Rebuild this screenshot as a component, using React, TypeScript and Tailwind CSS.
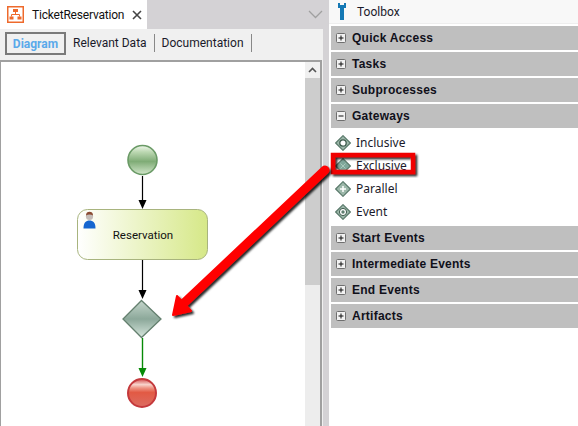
import React from 'react';

const ui = 'font-["Roboto","Liberation_Sans",sans-serif]';
const sans = 'font-["Noto_Sans","Liberation_Sans",sans-serif]';
const heading = 'font-["Liberation_Sans",sans-serif]';

function Expander({ open }: { open?: boolean }) {
  return (
    <svg width="11" height="11" viewBox="0 0 11 11" className="shrink-0">
      <rect x="0.5" y="0.5" width="9" height="9" rx="1" fill="#f2f2f2" stroke="#6f6f6f" />
      <path d={open ? 'M2.5 5h5' : 'M2.5 5h5M5 2.5v5'} stroke="#111" strokeWidth="1" />
    </svg>
  );
}

function Header({ label, open }: { label: string; open?: boolean }) {
  return (
    <div className="h-6 flex items-center pl-[5px] gap-[5px] bg-[#bfbfbf] mb-0.5">
      <Expander open={open} />
      <span className={`${heading} font-bold text-[12px] tracking-[0.25px] text-[#10101a]`}>{label}</span>
    </div>
  );
}

function GatewayIcon({ mark, flat }: { mark: 'ring' | 'x' | 'plus' | 'target'; flat?: boolean }) {
  return (
    <svg width="16" height="16" viewBox="0 0 16 16" className="shrink-0">
      <path d="M8 .7 15.3 8 8 15.3 .7 8Z" fill={flat ? '#7fa79a' : '#9db8aa'} stroke="#5a7a6b" strokeWidth="1.2" />
      {mark === 'ring' && <circle cx="8" cy="8" r="3.2" fill="#fff" stroke="#3f5c4e" strokeWidth="1.3" />}
      {mark === 'x' && <path d="M5.5 5.5l5 5M10.5 5.5l-5 5" stroke="#a9c8bb" strokeWidth="1" />}
      {mark === 'plus' && <path d="M8 5v6M5 8h6" stroke="#fff" strokeWidth="1.5" />}
      {mark === 'target' && (
        <>
          <circle cx="8" cy="8" r="3.6" fill="#fff" stroke="#3f5c4e" />
          <circle cx="8" cy="8" r="1.7" fill="#5f7f70" />
        </>
      )}
    </svg>
  );
}

function Item({ label, mark }: { label: string; mark: 'ring' | 'x' | 'plus' | 'target' }) {
  return (
    <div className="h-[23px] flex items-center pl-[4px] gap-[5px]">
      <GatewayIcon mark={mark} flat={mark === 'x'} />
      <span className={`${sans} text-[12px] text-[#1a1a2a]`}>{label}</span>
    </div>
  );
}

function Diagram() {
  return (
    <svg width="304" height="364" viewBox="1 62 304 364" className="block">
      <defs>
        <linearGradient id="gGreen" x1="0" y1="0" x2="0" y2="1">
          <stop offset="0" stopColor="#f0f7ec" />
          <stop offset="0.22" stopColor="#bcd8b2" />
          <stop offset="0.55" stopColor="#7fac76" />
          <stop offset="1" stopColor="#d2e6cb" />
        </linearGradient>
        <linearGradient id="gRed" x1="0" y1="0" x2="0" y2="1">
          <stop offset="0" stopColor="#d24c4c" />
          <stop offset="0.2" stopColor="#f8d4cc" />
          <stop offset="0.32" stopColor="#ee9484" />
          <stop offset="0.48" stopColor="#e25a44" />
          <stop offset="1" stopColor="#dc6c62" />
        </linearGradient>
        <linearGradient id="gTask" x1="0" y1="0" x2="1" y2="0">
          <stop offset="0" stopColor="#ffffff" />
          <stop offset="1" stopColor="#d6e888" />
        </linearGradient>
        <linearGradient id="gGate" x1="0" y1="0" x2="0" y2="1">
          <stop offset="0" stopColor="#c5d6cc" />
          <stop offset="0.5" stopColor="#8ca89a" />
          <stop offset="1" stopColor="#d6e6dd" />
        </linearGradient>
      </defs>

      <circle cx="142.5" cy="160" r="14.5" fill="url(#gGreen)" stroke="#6a9a66" strokeWidth="1.6" />
      <path d="M142.5 176V202" stroke="#000" strokeWidth="1.2" />
      <path d="M138.5 200h8l-4 9Z" fill="#000" />

      <rect x="77.5" y="209.5" width="130" height="50" rx="10" fill="url(#gTask)" stroke="#a8b47e" />
      <circle cx="89.5" cy="216.5" r="3.6" fill="#c4bcb8" />
      <path d="M86 215.5c0-3 1.500-3.800 3.500-3.800s3.500 .8 3.500 3.800c-2-1.200-5-1.200-7 0Z" fill="#8a4a32" />
      <path d="M83.500 228.500c0-6 2.500-8 6-8s6 2 6 8Z" fill="#1566d0" />
      <text x="143" y="239" textAnchor="middle" fontSize="11.5" fill="#111" fontFamily="Roboto, Liberation Sans, sans-serif">
        Reservation
      </text>

      <path d="M142.5 260V293" stroke="#000" strokeWidth="1.2" />
      <path d="M138.5 290h8l-4 9Z" fill="#000" />

      <path d="M141.5 300.5 161 319 141.5 337.5 123 319Z" fill="url(#gGate)" stroke="#64806f" strokeWidth="1.3" />

      <path d="M142.5 338V372" stroke="#078a07" strokeWidth="1.4" />
      <path d="M138.5 368h8l-4 9Z" fill="#078a07" />

      <circle cx="142" cy="393" r="14" fill="url(#gRed)" stroke="#c4393c" strokeWidth="2" />
    </svg>
  );
}

export default function App() {
  return (
    <div className="relative w-[578px] h-[426px] overflow-hidden bg-white flex">
      {/* left pane */}
      <div className="w-[323px] shrink-0 flex flex-col bg-[#f0f0f0]">
        <div className="h-[29px] flex bg-[#d4d2d5]">
          <div className="w-[147px] bg-white flex items-center pl-[7px] gap-2">
            <svg width="17" height="17" viewBox="0 0 17 17" className="shrink-0">
              <rect x="0.75" y="0.75" width="15.5" height="15.5" fill="#fff" stroke="#ee6a2c" strokeWidth="1.5" />
              <path d="M6 3h5v3H6ZM2.5 10.5h4v3h-4ZM10.5 10.5h4v3h-4Z" fill="#ee6a2c" />
              <path d="M8.5 6v2.5M4.5 10.5v-2h8v2" stroke="#ee6a2c" fill="none" />
            </svg>
            <span className={`${ui} text-[12px] tracking-[-0.2px] text-[#111]`}>TicketReservation</span>
            <svg width="10" height="10" viewBox="0 0 10 10" className="ml-auto mr-[6px] shrink-0">
              <path d="M1 1l8 8M9 1l-8 8" stroke="#444" strokeWidth="1.6" />
            </svg>
          </div>
          <div className="flex-1 flex items-center justify-end">
            <svg width="15" height="9" viewBox="0 0 15 9">
              <path d="M1 1l6.5 6.500L14 1" stroke="#a0a0a0" strokeWidth="1.3" fill="none" />
            </svg>
          </div>
        </div>

        <div className={`${ui} h-[31px] flex items-start pt-[3px] pl-[5px] text-[12px] text-[#1a1a2a]`}>
          <div className="h-[23px] w-[61px] border-2 border-[#7a7a7a] flex items-center justify-center font-bold text-[#5aa9ea]">
            Diagram
          </div>
          <div className="h-[18px] mt-[2px] ml-[7px] pr-[7px] border-r border-[#888] flex items-center">Relevant Data</div>
          <div className="h-[18px] mt-[2px] ml-[7px] pr-[7px] border-r border-[#888] flex items-center">Documentation</div>
        </div>

        <div className="flex-1 mr-px flex border-t-2 border-r-2 border-l border-[#a0a0a0] bg-white min-h-0">
          <div className="w-[304px] shrink-0">
            <Diagram />
          </div>
          <div className="flex-1 flex flex-col bg-[#ededed]">
            <div className="h-4 bg-[#f0f0f0] flex items-center justify-center">
              <svg width="9" height="6" viewBox="0 0 9 6">
                <path d="M1 5l3.500-3.500L8 5" stroke="#555" strokeWidth="1.6" fill="none" />
              </svg>
            </div>
            <div className="h-[207px] bg-[#cdcdcd]" />
          </div>
        </div>
      </div>

      <div className="w-1.5 shrink-0 bg-[#d4d2d5]" />

      {/* toolbox */}
      <div className="flex-1 flex flex-col bg-white">
        <div className="h-[24px] bg-[#f8f8f8] flex items-center pl-[9px] gap-[11px] border-b border-[#eeeeee] shrink-0">
          <svg width="8" height="17" viewBox="0 0 8 17" className="shrink-0">
            <path d="M0 0h2v2h4V0h2v5H6v12H2V5H0Z" fill="#1478b4" />
          </svg>
          <span className={`${ui} text-[12px] text-[#1a1a2a]`}>Toolbox</span>
        </div>
        <div className="pl-[2px] pt-[2px] flex flex-col">
          <Header label="Quick Access" />
          <Header label="Tasks" />
          <Header label="Subprocesses" />
          <Header label="Gateways" open />
          <div className="pt-[1px] pb-[3px]">
            <Item label="Inclusive" mark="ring" />
            <Item label="Exclusive" mark="x" />
            <Item label="Parallel" mark="plus" />
            <Item label="Event" mark="target" />
          </div>
          <Header label="Start Events" />
          <Header label="Intermediate Events" />
          <Header label="End Events" />
          <Header label="Artifacts" />
        </div>
      </div>

      {/* red annotation overlay */}
      <svg width="578" height="426" viewBox="0 0 578 426" className="absolute inset-0 pointer-events-none">
        <defs>
          <filter id="shadow" x="-20%" y="-20%" width="150%" height="150%">
            <feDropShadow dx="2" dy="2" stdDeviation="1.2" floodColor="#000" floodOpacity="0.85" />
          </filter>
        </defs>
        <rect x="333" y="155" width="80" height="17" fill="none" stroke="#f00000" strokeWidth="4.500" filter="url(#shadow)" />
        <g filter="url(#shadow)">
          <path d="M325 170 184 303" stroke="#ff0000" strokeWidth="9" strokeLinecap="round" />
          <path d="M173 315 177 296 191 311Z" fill="#ff0000" stroke="#ff0000" strokeLinejoin="round" strokeWidth="2" />
        </g>
      </svg>
    </div>
  );
}
